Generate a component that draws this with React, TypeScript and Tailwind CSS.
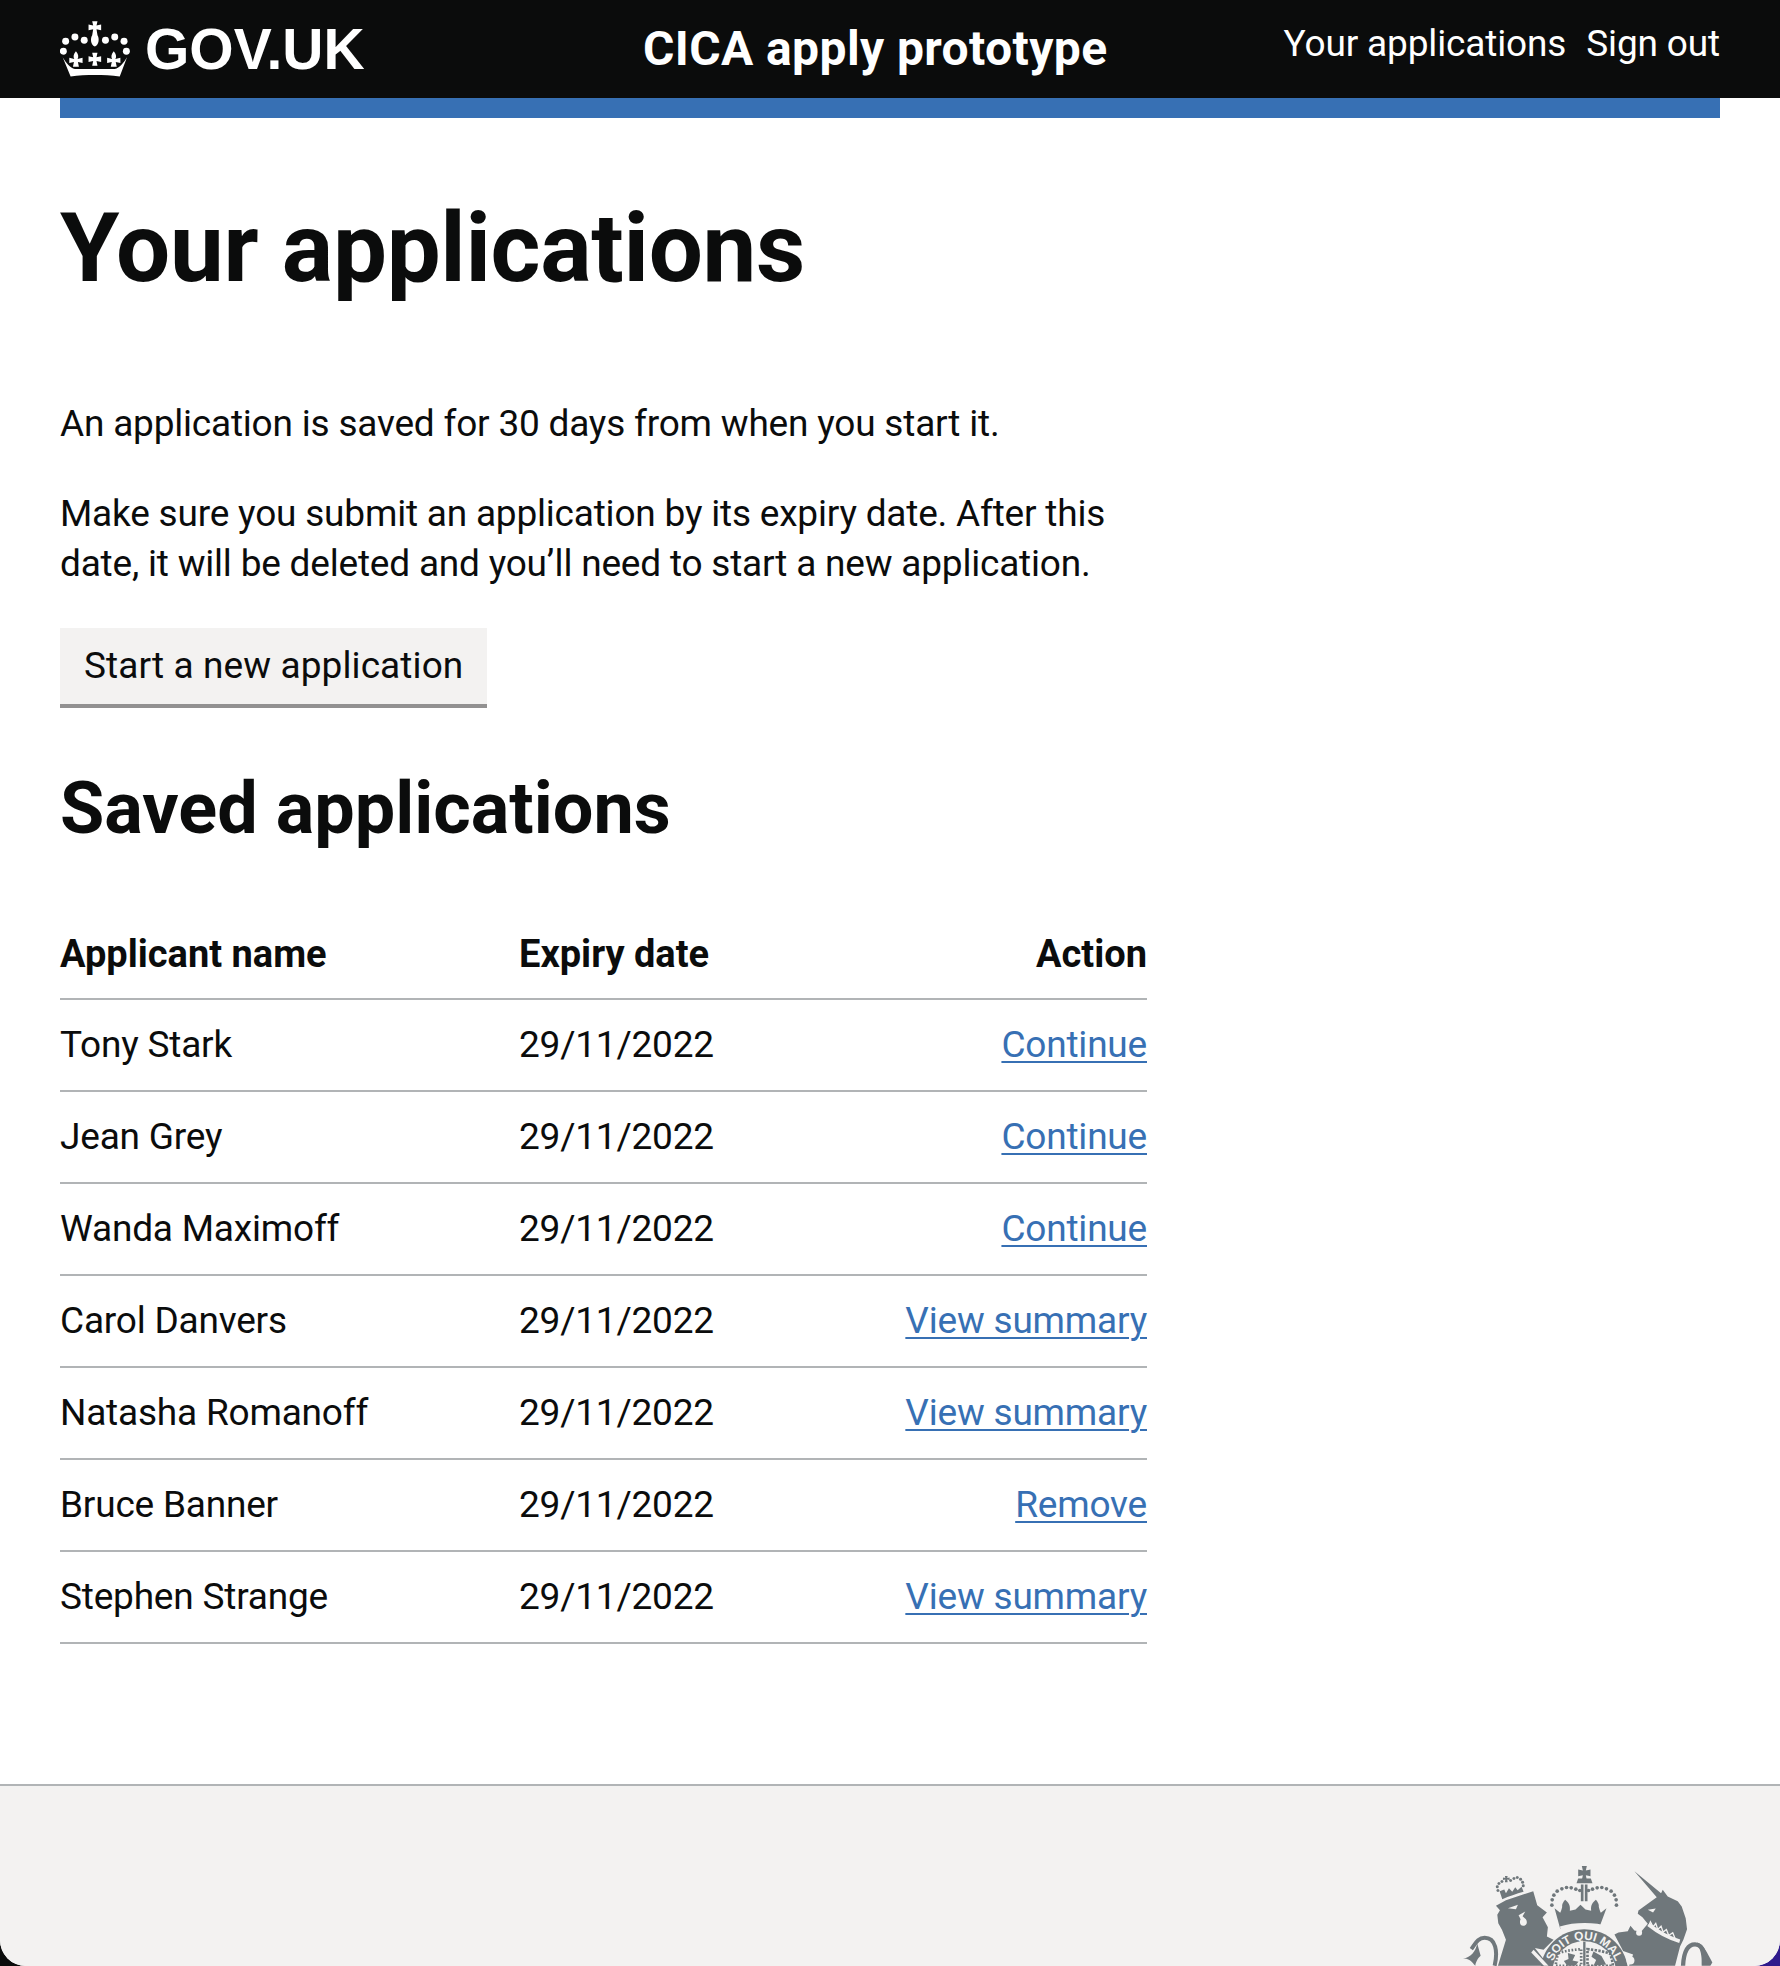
const rows = [
  { name: "Tony Stark", action: "Continue" },
  { name: "Jean Grey", action: "Continue" },
  { name: "Wanda Maximoff", action: "Continue" },
  { name: "Carol Danvers", action: "View summary" },
  { name: "Natasha Romanoff", action: "View summary" },
  { name: "Bruce Banner", action: "Remove" },
  { name: "Stephen Strange", action: "View summary" },
];

const crownDots = [
  [103, 77],
  [75, 67],
  [47, 80],
  [40, 110],
  [167, 77],
  [195, 67],
  [223, 80],
  [230, 110],
];

function Crown() {
  return (
    <svg viewBox="30 20 220 170" className="h-[57px] w-[73px] fill-white" aria-hidden="true">
      <path d="M127 20h16l-3 13 14-3v17l-14-3 3 18c6 8 5 30-8 34-13-4-14-26-8-34l3-18-14 3V30l14 3z" />
      {crownDots.map(([x, y]) => (
        <circle key={x} cx={x} cy={y} r="10.5" />
      ))}
      <path d="M127 115h16l-3 13 14-3v18l-14-3 3 14h-16l3-14-14 3v-18l14 3z" />
      <path d="M78 110c7 9 9 15 5 24l15-4v16l-14-3 3 14H69l3-14-14 3v-16l15 4c-4-9-2-15 5-24z" />
      <path d="M192 110c7 9 9 15 5 24l15-4v16l-14-3 3 14h-18l3-14-14 3v-16l15 4c-4-9-2-15 5-24z" />
      <path d="M38 128c10 16 22 32 37 36h120c15-4 27-20 37-36l-22 58c-48-6-102-6-148 0z" />
    </svg>
  );
}

// dots around the top of the big crown, in the same units as the viewBox
const archDots = [
  [400, 196], [401, 180], [406, 166], [416, 154], [430, 147], [444, 143], [458, 144], [472, 148], [484, 152],
  [510, 152], [522, 148], [536, 144], [550, 143], [564, 147], [578, 154], [588, 166], [593, 180], [594, 196],
];

const lionDots = [
  [238, 152], [236, 141], [241, 131], [250, 125], [276, 122], [286, 116], [296, 113], [306, 118], [312, 127], [314, 138],
];

function Coat() {
  return (
    <svg viewBox="130 70 760 308" className="h-[103px] w-[253px] fill-[#6f777b]" aria-hidden="true">
      <defs>
        <path id="motto" d="M397 400A100 100 0 0 1 597 400" />
      </defs>

      {/* big crown */}
      <path d="M490 78h15l-3 14 14-3v20l-14-3 3 14h-15l3-14-14 3V89l14 3z" />
      <path d="M479 116h38l5 14h-48z" />
      <path d="M487 134h8v50h-8zM499 134h8v50h-8z" />
      {archDots.map(([x, y]) => (
        <circle key={`${x}-${y}`} cx={x} cy={y} r="5.5" />
      ))}
      <path d="M408 205l17 14c4-8 6-18 6-18s-2-10 9-21c9 9 16 14 14 33l17-4 15-14 15 14 17 4c-2-19 5-24 14-33 11 11 9 21 9 21s2 10 6 18l17-14-23 62c-38-10-80-10-116 0z" />
      <path d="M424 260c45-14 104-14 148 0l-5 18c-44-12-92-12-138 0z" className="fill-[#f3f2f1]" />

      {/* shield and garter */}
      <circle cx="497" cy="400" r="132" />
      <circle cx="497" cy="400" r="96" className="fill-[#f3f2f1]" />
      <text className="fill-[#f3f2f1] font-['Liberation_Sans',sans-serif] text-[36px] font-bold">
        <textPath href="#motto" startOffset="50%" textAnchor="middle">
          SOIT QUI MAL
        </textPath>
      </text>
      <path d="M494 306h7v72h-7z" />
      <path d="M420 340c20-8 50-10 68-12v50h-76c0-14 3-26 8-38z" fill="none" stroke="#6f777b" strokeWidth="8" strokeDasharray="5 5" />
      <path d="M507 328c20 2 46 6 68 14 4 12 8 24 8 36h-76z" fill="none" stroke="#6f777b" strokeWidth="8" strokeDasharray="7 4" />
      <path d="M448 340l22 6-8 16 18 4-10 12h-24l-10-14 14-6zM525 335l24 14 14 25-38 4 8-17-14-10z" />

      {/* lion */}
      {lionDots.map(([x, y]) => (
        <circle key={`${x}-${y}`} cx={x} cy={y} r="4.5" />
      ))}
      <path d="M259 108h8l-1 6 7-1v7l-7-1 1 8h-8l1-8-7 1v-7l7 1z" />
      <path d="M251 178l-8-24 14-5 5 11 9-15 10 11 9-14 7 9 12-10 6 15c-22 6-44 14-64 22z" />
      <path d="M232 198l30-17 82-27 12 42 29 22-13 14 16 30-3 28 20 10-30 30-26-5 42 53H238l24-78-12-30-11-20-3-25 8-14z" />
      <path d="M268 205l30-10-6 13zM300 226l20-11-8 14 10 9c6 10 2 20-8 20s-12-12-8-20z" className="fill-[#f3f2f1]" />
      <path d="M345 330l45 48h-14l-38-40z" className="fill-[#f3f2f1]" />
      {/* lion tail */}
      <path d="M228 378c10-42 4-84-30-84-20 0-28 18-40 34" fill="none" stroke="#6f777b" strokeWidth="12" />
      <path d="M176 312c-6 24-18 40-46 46 18-4 26 4 40 20 0-8 8-24 16-30z" />

      {/* unicorn */}
      <path d="M648 94L728 160L733 150L748 170L778 184L790 200L802 235L806 268L795 300L785 320L770 378H632L644 344L614 334L588 284L600 278L628 274L636 258L648 272L668 276L688 252L672 232L658 222L660 212L690 190L715 172Z" />
      <circle cx="662" cy="279" r="9" className="fill-[#f3f2f1]" />
      <circle cx="636" cy="362" r="12" className="fill-[#f3f2f1]" />
      <path d="M688 210l24-4-8 12z" className="fill-[#f3f2f1]" />
      <path d="M690 254c30 24 60 40 94 50" fill="none" stroke="#f3f2f1" strokeWidth="11" />
      <path d="M692 256l4-10 8 15 8-10 6 18 10-10 6 18 10-8 7 18 12-8 8 19-6 1" fill="none" stroke="#f3f2f1" strokeWidth="4" />
      {/* unicorn tail */}
      <path d="M794 378c2-40 14-64 36-64 16 0 24 14 28 28" fill="none" stroke="#6f777b" strokeWidth="13" />
      <path d="M836 308c20 6 30 30 46 60l-6 10h-26c0-20 2-36-14-70z" />
    </svg>
  );
}

export default function App() {
  return (
    <div className="flex h-[1966px] flex-col overflow-hidden bg-[linear-gradient(to_right,#0b0c0c_50%,#2e1a8c_50%)] font-['Roboto',sans-serif] text-[37px] leading-[50px] tracking-[-0.2px] text-[#0b0c0c]">
      <div className="flex flex-1 flex-col rounded-b-[26px] bg-white">
        <header className="flex h-[98px] items-center bg-[#0b0c0c] px-[60px] tracking-normal text-white">
          <div className="flex w-[583px] items-center gap-[12px]">
            <Crown />
            <span className="font-['Liberation_Sans',sans-serif] text-[57px] font-bold leading-none">GOV.UK</span>
          </div>
          <div className="text-[48px] font-bold tracking-[0.4px]">CICA apply prototype</div>
          <nav className="ml-auto flex gap-[20px] pb-[10px] text-[37px] tracking-[-0.15px]">
            <span>Your applications</span>
            <span>Sign out</span>
          </nav>
        </header>
        <div className="mx-[60px] h-[20px] bg-[#3770b4]" />
        <main className="px-[60px] pt-[80px] pb-[140px]">
          <h1 className="mb-[101px] text-[96px] leading-[100px] font-bold tracking-[-0.3px]">Your applications</h1>
          <div className="w-[1087px]">
            <p className="mb-[40px]">An application is saved for 30 days from when you start it.</p>
            <p className="mb-[39px]">
              Make sure you submit an application by its expiry date. After this date, it will be deleted and you’ll need to start a new application.
            </p>
            <button className="mb-[61px] block h-[80px] border-b-[4px] border-[#929191] bg-[#f3f2f1] px-[24px] text-[37px] tracking-[0.1px]">
              Start a new application
            </button>
            <h2 className="mb-[60px] text-[72px] leading-[80px] font-bold tracking-normal">Saved applications</h2>
            <table className="w-full border-collapse">
              <thead>
                <tr className="border-b-2 border-[#b1b4b6] text-left text-[38px] tracking-normal">
                  <th className="h-[90px] w-[459px] font-bold">Applicant name</th>
                  <th className="font-bold">Expiry date</th>
                  <th className="text-right font-bold">Action</th>
                </tr>
              </thead>
              <tbody>
                {rows.map((row) => (
                  <tr key={row.name} className="border-b-2 border-[#b1b4b6]">
                    <td className="h-[92px]">{row.name}</td>
                    <td>29/11/2022</td>
                    <td className="text-right">
                      <a href="#" className="text-[#3770b4] underline decoration-2 underline-offset-[4px]">
                        {row.action}
                      </a>
                    </td>
                  </tr>
                ))}
              </tbody>
            </table>
          </div>
        </main>
        <footer className="flex flex-1 items-end justify-end overflow-hidden rounded-b-[26px] border-t-2 border-[#b1b4b6] bg-[#f3f2f1] pr-[65px]">
          <Coat />
        </footer>
      </div>
    </div>
  );
}
